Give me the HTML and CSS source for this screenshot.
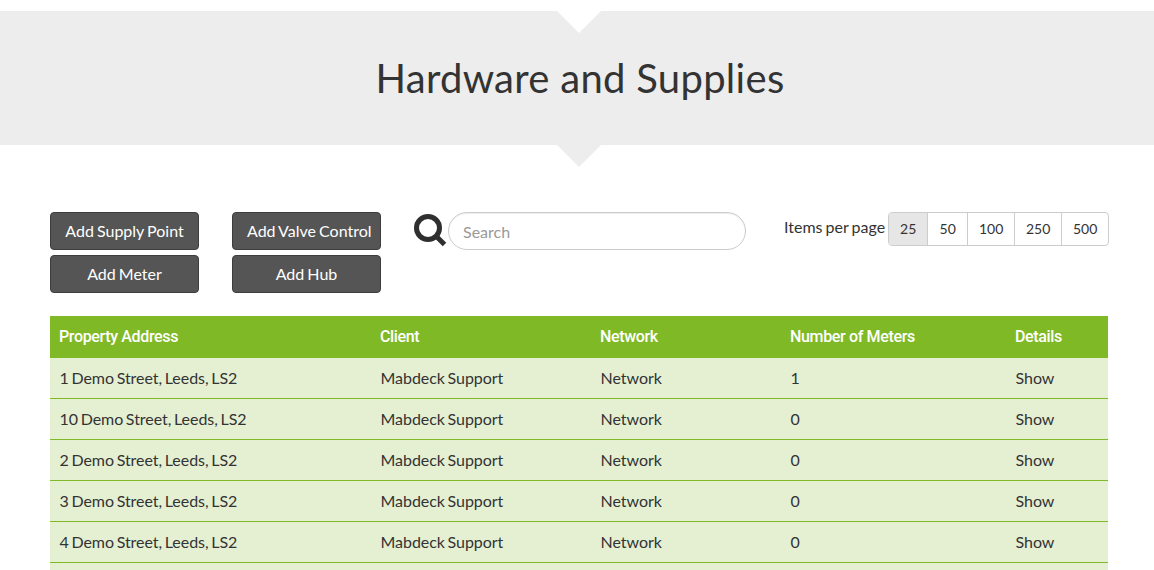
FILE: index.html
```html
<!DOCTYPE html>
<html lang="en">
<head>
<meta charset="utf-8">
<title>Hardware and Supplies</title>
<link rel="stylesheet" href="styles.css">
</head>
<body>
<header class="banner">
  <span class="notch notch-top"></span>
  <h1 class="banner-title">Hardware and Supplies</h1>
  <span class="notch notch-bottom"></span>
</header>
<main class="content">
  <div class="toolbar">
    <div class="actions">
      <button class="action">Add Supply Point</button>
      <button class="action">Add Valve Control</button>
      <button class="action">Add Meter</button>
      <button class="action">Add Hub</button>
    </div>
    <div class="search">
      <svg class="search-icon" viewBox="0 0 33 33" width="33" height="33" aria-hidden="true">
        <circle cx="14" cy="14" r="11.5" fill="none" stroke="#2f2f2f" stroke-width="5"/>
        <path d="M22.5 22.5 L30.5 30.5" stroke="#2f2f2f" stroke-width="5" fill="none"/>
      </svg>
      <input class="search-input" type="text" placeholder="Search">
    </div>
    <div class="pager">
      <span class="pager-label">Items per page</span>
      <div class="pager-group">
        <span class="pager-item pager-active">25</span>
        <span class="pager-item">50</span>
        <span class="pager-item">100</span>
        <span class="pager-item">250</span>
        <span class="pager-item">500</span>
      </div>
    </div>
  </div>
  <table class="data">
    <colgroup>
      <col class="c1"><col class="c2"><col class="c3"><col class="c4"><col class="c5">
    </colgroup>
    <thead>
      <tr><th>Property Address</th><th>Client</th><th>Network</th><th>Number of Meters</th><th>Details</th></tr>
    </thead>
    <tbody>
      <tr><td>1 Demo Street, Leeds, LS2</td><td>Mabdeck Support</td><td>Network</td><td>1</td><td>Show</td></tr>
      <tr><td>10 Demo Street, Leeds, LS2</td><td>Mabdeck Support</td><td>Network</td><td>0</td><td>Show</td></tr>
      <tr><td>2 Demo Street, Leeds, LS2</td><td>Mabdeck Support</td><td>Network</td><td>0</td><td>Show</td></tr>
      <tr><td>3 Demo Street, Leeds, LS2</td><td>Mabdeck Support</td><td>Network</td><td>0</td><td>Show</td></tr>
      <tr><td>4 Demo Street, Leeds, LS2</td><td>Mabdeck Support</td><td>Network</td><td>0</td><td>Show</td></tr>
      <tr class="row-tail"><td colspan="5"></td></tr>
    </tbody>
  </table>
</main>
</body>
</html>
```
FILE: styles.css
```css
html, body {
  margin: 0;
  height: 570px;
  overflow: hidden;
  background: #fff;
}
body {
  font-family: Lato, "Open Sans", sans-serif;
  font-size: 16px;
  color: #333;
  padding-top: 11px;
  box-sizing: border-box;
}
.banner {
  position: relative;
  height: 134px;
  box-sizing: border-box;
  padding-left: 6px;
  background: #ededed;
  display: flex;
  align-items: center;
  justify-content: center;
}
.banner-title {
  margin: 0;
  font-size: 40px;
  font-weight: 400;
  line-height: 48px;
  letter-spacing: 0.29px;
  color: #333;
}
.notch {
  position: absolute;
  left: 557px;
  width: 0;
  height: 0;
  border-left: 22.5px solid transparent;
  border-right: 22.5px solid transparent;
}
.notch-top {
  top: 0;
  border-top: 22.5px solid #fff;
}
.notch-bottom {
  top: 100%;
  border-top: 22.5px solid #ededed;
}
.content {
  padding: 67px 46px 0 50px;
}
.toolbar {
  display: flex;
  align-items: flex-start;
  height: 104px;
}
.actions {
  display: grid;
  grid-template-columns: 149px 149px;
  grid-auto-rows: 38px;
  column-gap: 33px;
  row-gap: 5px;
}
.action {
  margin: 0;
  padding: 0 14px 2px;
  background: #555;
  border: 1px solid #3d3d3d;
  border-radius: 4px;
  color: #fff;
  font: 400 16px Lato, sans-serif;
  word-spacing: -1px;
  white-space: nowrap;
}
.search {
  display: flex;
  align-items: flex-start;
  margin-left: 33px;
}
.search-icon {
  margin-top: 2px;
  margin-right: 1px;
  flex: none;
}
.search-input {
  box-sizing: border-box;
  width: 298px;
  height: 38px;
  padding: 0 14px;
  border: 1px solid #ccc;
  border-radius: 19px;
  font: 400 16px Lato, sans-serif;
  color: #333;
  box-shadow: inset 0 1px 1px rgba(0, 0, 0, 0.075);
  outline: none;
}
.search-input::placeholder {
  color: #999;
  opacity: 1;
}
.pager {
  display: flex;
  align-items: flex-start;
  margin-left: 38px;
}
.pager-label {
  line-height: 30px;
  margin-right: 3px;
  word-spacing: -1px;
  white-space: nowrap;
}
.pager-group {
  display: grid;
  grid-template-columns: 38px 40px 47px 47px 47px;
  height: 34px;
  box-sizing: border-box;
  border: 1px solid #ccc;
  border-radius: 4px;
  overflow: hidden;
  font-size: 14px;
  line-height: 32px;
  background: #fff;
}
.pager-item {
  border-left: 1px solid #ccc;
  text-align: center;
}
.pager-item:first-child {
  border-left: 0;
}
.pager-active {
  background: #e6e6e6;
}
.data {
  width: 1058px;
  border-collapse: separate;
  border-spacing: 0;
  table-layout: fixed;
}
.c1 { width: 321px; }
.c2 { width: 220px; }
.c3 { width: 190px; }
.c4 { width: 225px; }
.c5 { width: 102px; }
.data th {
  height: 42px;
  padding: 0 9px 2px;
  box-sizing: border-box;
  background: #7fba26;
  color: #fff;
  font: 500 16px Roboto, sans-serif;
  letter-spacing: -0.35px;
  text-align: left;
}
.data td {
  height: 41px;
  box-sizing: border-box;
  padding: 0 10px 2px 9.5px;
  background: #e5f0d3;
  border-bottom: 1px solid #7fba26;
  font-size: 16px;
  letter-spacing: -0.04px;
  word-spacing: -1.4px;
  color: #333;
  white-space: nowrap;
}
.data .row-tail td {
  height: 7px;
  padding: 0;
  border-bottom: 0;
}
```
